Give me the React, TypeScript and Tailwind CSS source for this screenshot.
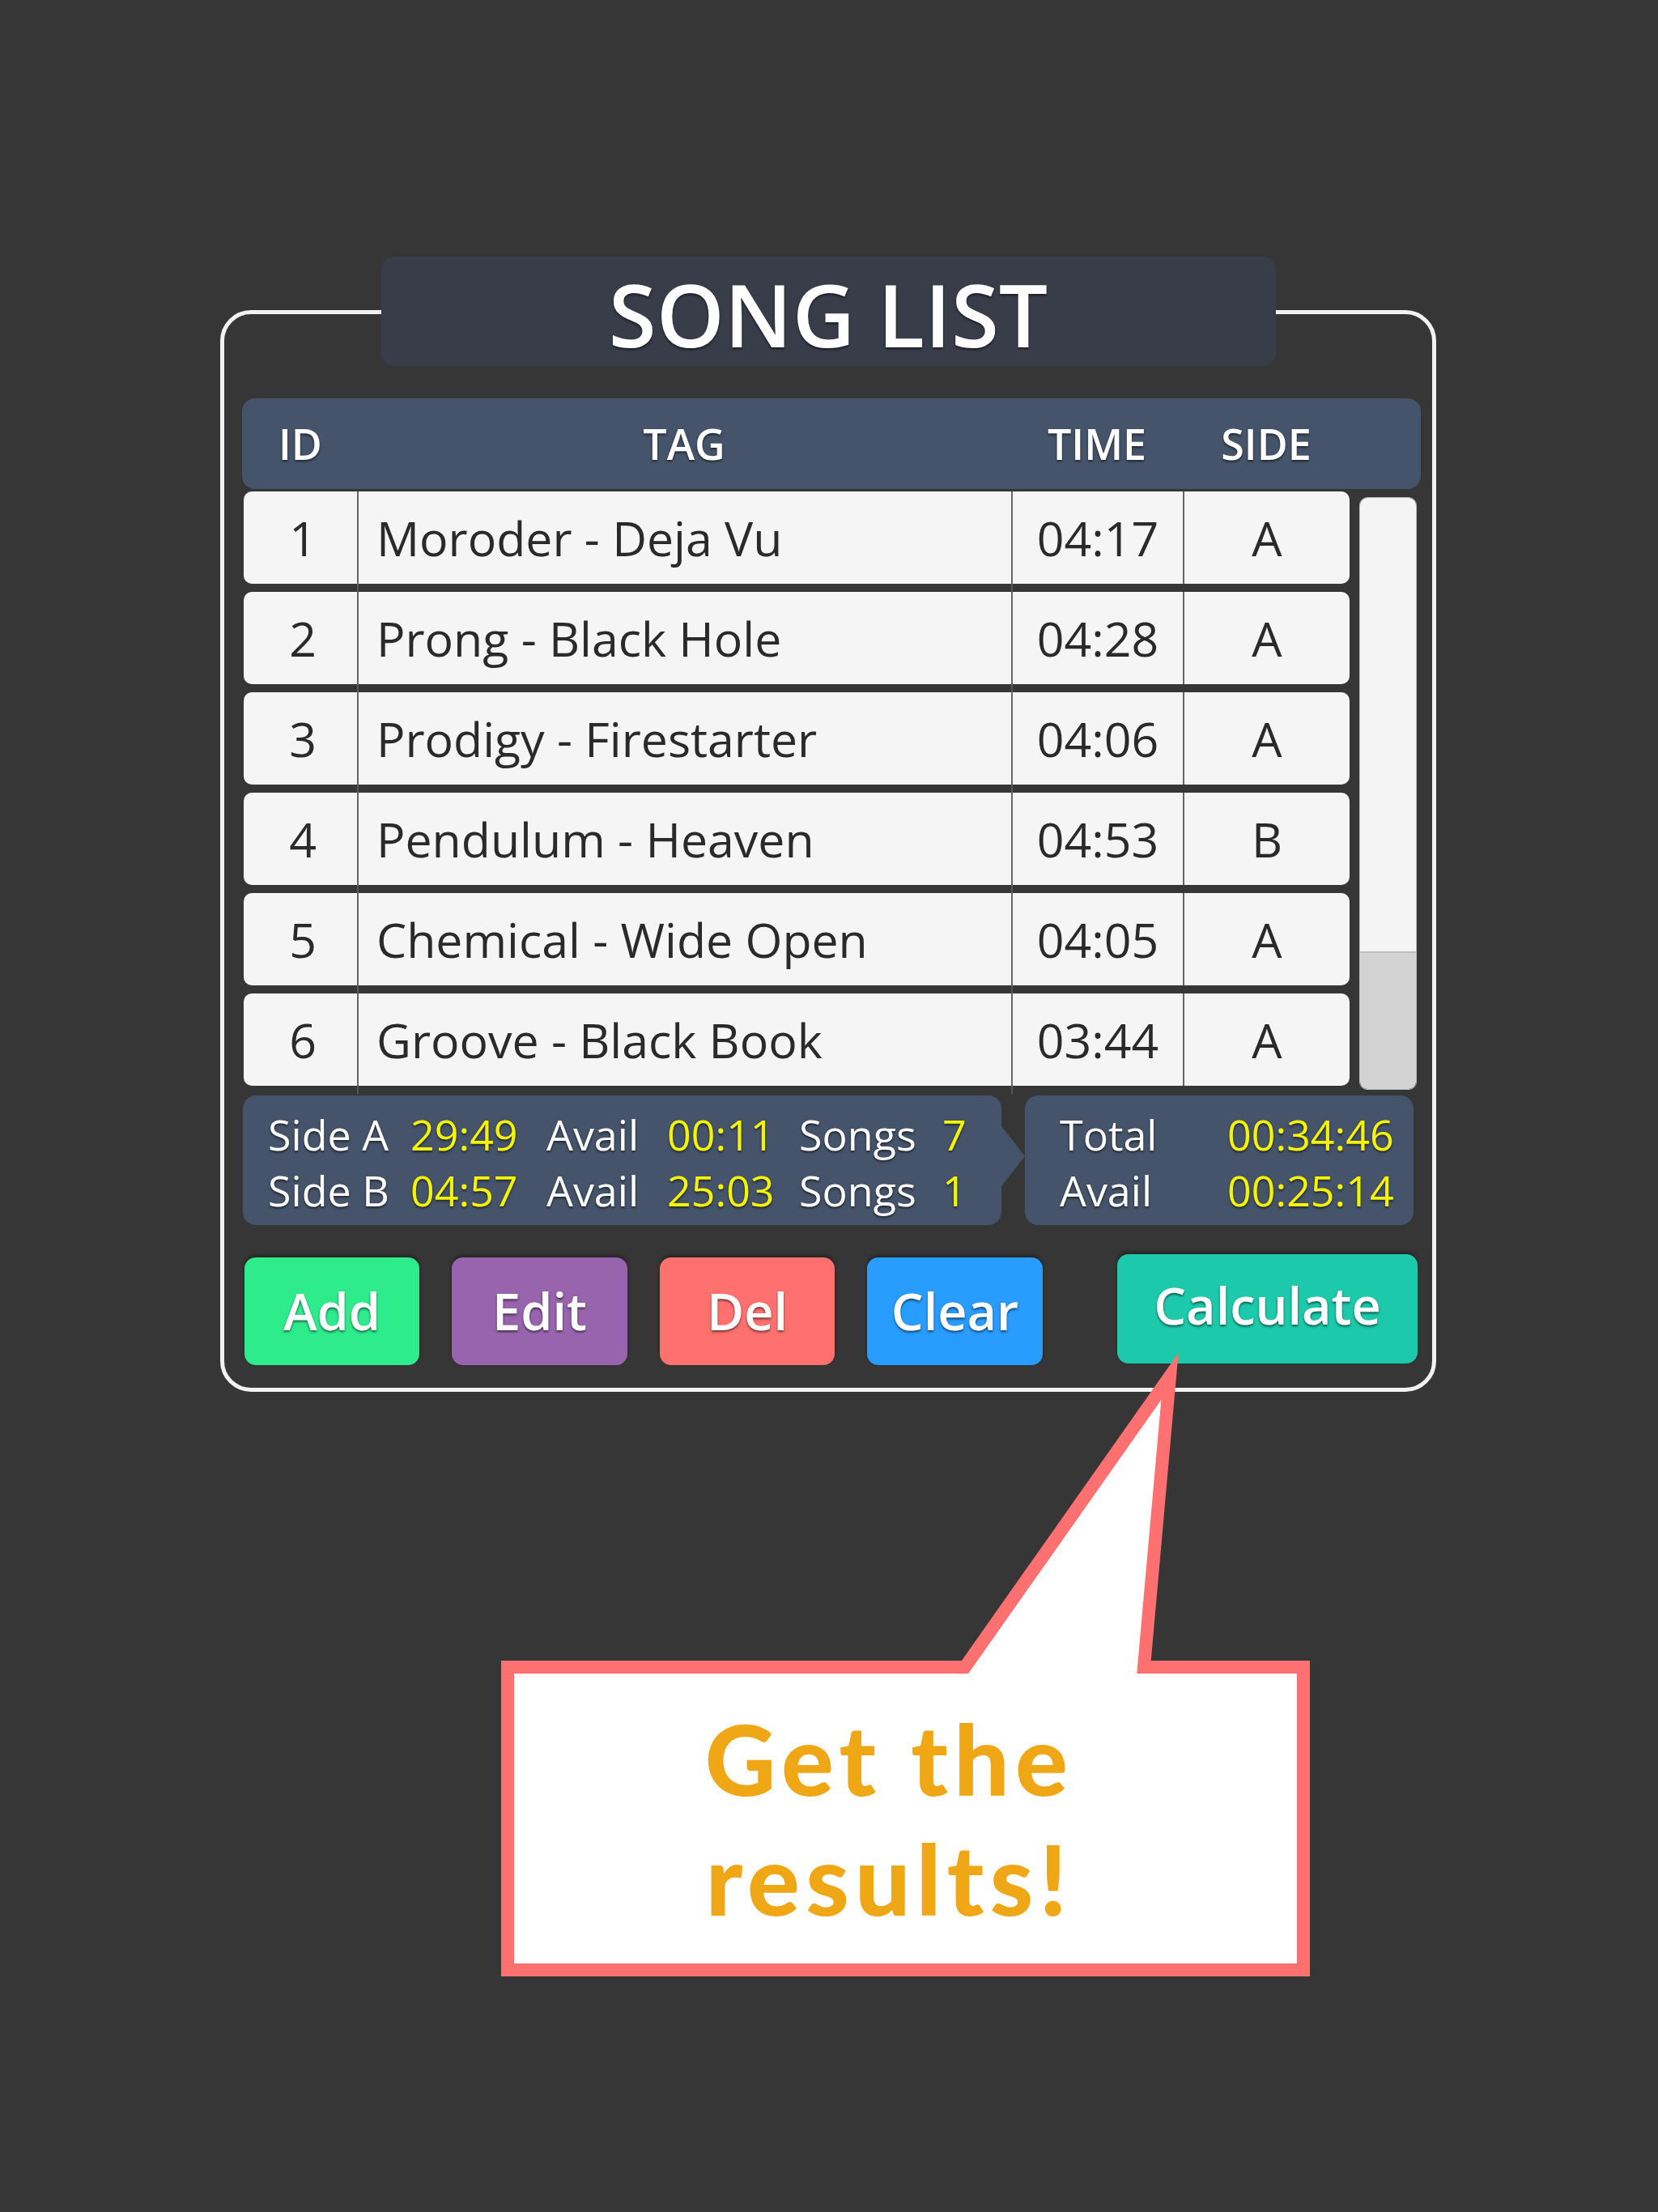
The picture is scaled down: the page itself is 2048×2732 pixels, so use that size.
import React from 'react';

type Song = { id: number; tag: string; time: string; side: 'A' | 'B' };

const SONGS: Song[] = [
  { id: 1, tag: 'Moroder - Deja Vu', time: '04:17', side: 'A' },
  { id: 2, tag: 'Prong - Black Hole', time: '04:28', side: 'A' },
  { id: 3, tag: 'Prodigy - Firestarter', time: '04:06', side: 'A' },
  { id: 4, tag: 'Pendulum - Heaven', time: '04:53', side: 'B' },
  { id: 5, tag: 'Chemical - Wide Open', time: '04:05', side: 'A' },
  { id: 6, tag: 'Groove - Black Book', time: '03:44', side: 'A' },
];

const BUTTONS = [
  { label: 'Add', cls: 'w-[216px] bg-[#2eec8c]' },
  { label: 'Edit', cls: 'w-[217px] bg-[#9864ad]' },
  { label: 'Del', cls: 'w-[216px] bg-[#ff716e]' },
  { label: 'Clear', cls: 'w-[217px] bg-[#289cff]' },
];

const SHADOW = '[text-shadow:0_2px_3px_rgba(0,0,0,0.55)]';
const COLS = 'grid-cols-[140px_808px_212px_206px]';

function SongRow({ song }: { song: Song }) {
  return (
    <div className={`grid h-[114px] ${COLS} overflow-hidden rounded-[10px] bg-[#f5f5f5] text-[59px] text-[#2a2a2a]`}>
      <div className="flex items-center justify-center pl-[6px]">{song.id}</div>
      <div className="flex items-center border-l-2 border-[#666] pl-[22px]">{song.tag}</div>
      <div className="flex items-center justify-center border-l-2 border-[#666]">{song.time}</div>
      <div className="flex items-center justify-center border-l-2 border-[#666]">{song.side}</div>
    </div>
  );
}

// column lines keep running through the gap between rows
function RowGap() {
  return (
    <div className={`grid h-[10px] ${COLS}`}>
      <div />
      <div className="border-l-2 border-[#5a5a5a]" />
      <div className="border-l-2 border-[#5a5a5a]" />
      <div />
    </div>
  );
}

export default function App() {
  return (
    <div
      className="relative min-h-[2732px] w-[2048px] bg-[#363636] pl-[272px] pt-[383px]"
      style={{ fontFamily: '"Open Sans", "Noto Sans", sans-serif' }}
    >
      <div className="w-[1502px] rounded-[38px] border-[5px] border-[#f2f2f2]">
        <div className="mx-auto -mt-[71px] flex h-[135px] w-[1105px] items-center justify-center rounded-[16px] bg-[#393d4a]">
          <span className={`pt-[6px] text-[107px] font-semibold leading-none text-white ${SHADOW}`}>SONG LIST</span>
        </div>

        <div className="pb-[28px] pl-[22px] pr-[14px]">
          {/* header */}
          <div className={`mt-[40px] grid h-[112px] ${COLS} rounded-[16px] bg-[#45546a] pl-[2px] text-[52px] font-semibold text-white ${SHADOW}`}>
            <div className="flex items-center justify-center">ID</div>
            <div className="flex items-center justify-center">TAG</div>
            <div className="flex items-center justify-center">TIME</div>
            <div className="flex items-center justify-center">SIDE</div>
          </div>

          {/* rows + scrollbar */}
          <div className="mt-[3px] flex items-start gap-[12px] pl-[2px]">
            <div className="flex flex-col">
              {SONGS.map((s, i) => (
                <React.Fragment key={s.id}>
                  {i > 0 && <RowGap />}
                  <SongRow song={s} />
                </React.Fragment>
              ))}
              <RowGap />
            </div>
            <div className="mt-[7px] flex h-[732px] w-[71px] flex-col overflow-hidden rounded-[10px] border border-[#bdbdbd]">
              <div className="flex-1 bg-[#f4f4f4]" />
              <div className="h-[170px] border-t-2 border-[#bcbcbc] bg-[#d3d3d3]" />
            </div>
          </div>

          {/* stats */}
          <div className={`ml-[1px] mt-[2px] flex h-[160px] text-[52px] font-medium leading-[69px] text-white ${SHADOW}`}>
            <div className="grid w-[937px] grid-cols-[176px_168px_149px_163px_177px_auto] content-start rounded-[16px] bg-[#45546a] pl-[31px] pt-[13px]">
              <span>Side A</span>
              <span className="text-[#f5f500]">29:49</span>
              <span>Avail</span>
              <span className="text-[#f5f500]">00:11</span>
              <span>Songs</span>
              <span className="text-[#f5f500]">7</span>
              <span>Side B</span>
              <span className="text-[#f5f500]">04:57</span>
              <span>Avail</span>
              <span className="text-[#f5f500]">25:03</span>
              <span>Songs</span>
              <span className="text-[#f5f500]">1</span>
            </div>
            <div className="flex w-[29px] items-center">
              <div className="-mt-[10px] h-0 w-0 border-y-[37px] border-l-[29px] border-y-transparent border-l-[#45546a]" />
            </div>
            <div className="grid w-[480px] grid-cols-[207px_auto] content-start rounded-[16px] bg-[#45546a] pl-[43px] pt-[13px]">
              <span>Total</span>
              <span className="text-[#f5f500]">00:34:46</span>
              <span>Avail</span>
              <span className="text-[#f5f500]">00:25:14</span>
            </div>
          </div>

          {/* buttons */}
          <div className="mt-[36px] flex items-end pl-[3px] pr-[4px]">
            <div className="flex gap-[40px]">
              {BUTTONS.map((b) => (
                <button
                  key={b.label}
                  className={`flex h-[133px] items-center justify-center rounded-[14px] text-[63px] font-semibold text-white shadow-[0_-3px_4px_rgba(0,0,0,0.35)] ${SHADOW} ${b.cls}`}
                >
                  {b.label}
                </button>
              ))}
            </div>
            <button
              className={`mb-[2px] ml-auto flex h-[135px] w-[371px] items-center justify-center rounded-[14px] bg-[#1dc9ab] pb-[8px] text-[63px] font-semibold text-white shadow-[0_-3px_4px_rgba(0,0,0,0.35)] ${SHADOW}`}
            >
              Calculate
            </button>
          </div>
        </div>
      </div>

      {/* callout overlay */}
      <svg
        className="pointer-events-none absolute left-0 top-0"
        width={2048}
        height={2732}
        viewBox="0 0 2048 2732"
      >
        <path
          d="M627 2059 L1192 2059 L1445 1700 L1413 2059 L1610 2059 L1610 2433 L627 2433 Z"
          fill="#ffffff"
          stroke="#ff7070"
          strokeWidth={16}
          strokeLinejoin="miter"
          strokeMiterlimit={10}
        />
      </svg>
      <div
        className="absolute left-[635px] top-[2067px] flex h-[358px] w-[967px] flex-col items-center justify-center pr-[40px] text-center text-[121px] font-black leading-[148px] tracking-[0.06em] text-[#efa716]"
        style={{ fontFamily: 'Lato, "Open Sans", sans-serif' }}
      >
        <span>Get the</span>
        <span>results!</span>
      </div>
    </div>
  );
}
